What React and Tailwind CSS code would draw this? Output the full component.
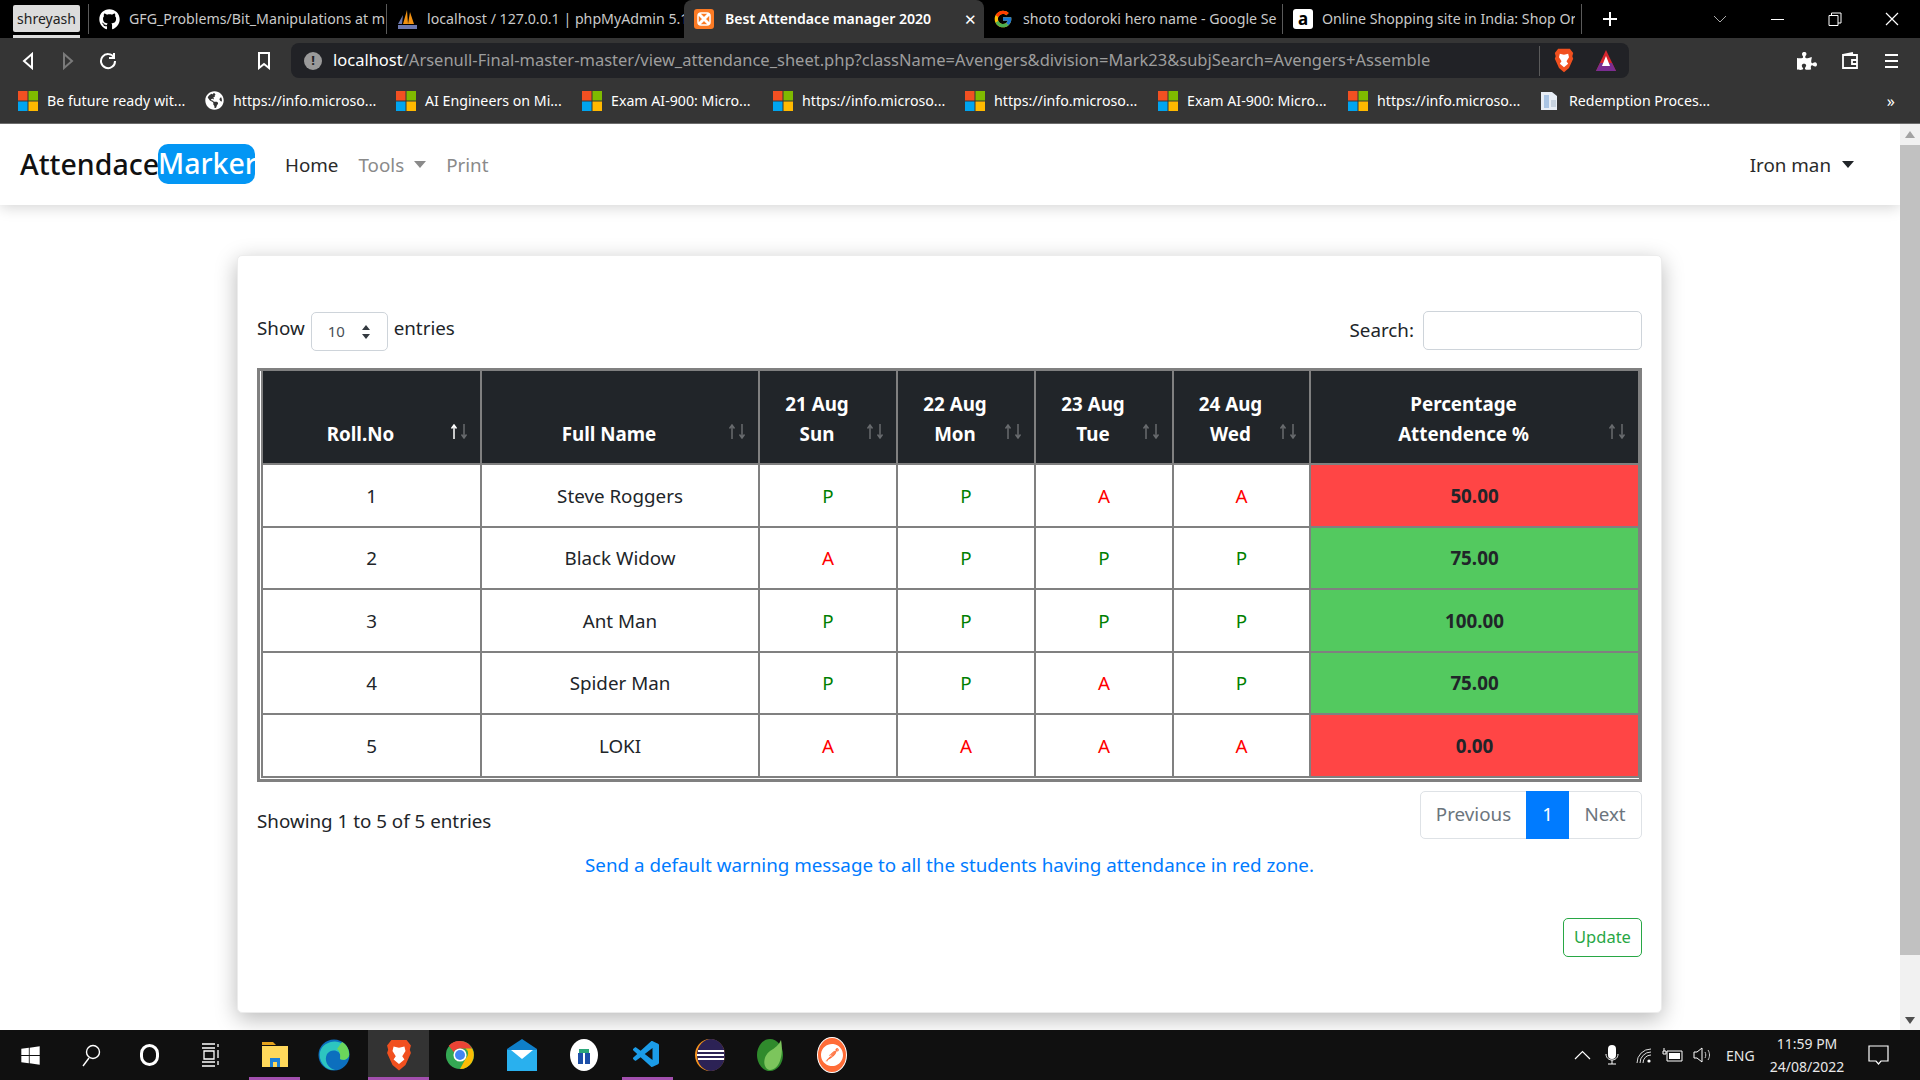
import React from "react";
import { FaGithub, FaWindows, FaPuzzlePiece, FaGlobeAmericas } from "react-icons/fa";
import { FcGoogle } from "react-icons/fc";
import { SiPostman } from "react-icons/si";
import { VscVscode } from "react-icons/vsc";

const Ms = () => (
  <svg width="20" height="20" viewBox="0 0 20 20" className="shrink-0">
    <rect width="9.5" height="9.5" fill="#f25022" />
    <rect x="10.5" width="9.5" height="9.5" fill="#7fba00" />
    <rect y="10.5" width="9.5" height="9.5" fill="#00a4ef" />
    <rect x="10.5" y="10.5" width="9.5" height="9.5" fill="#ffb900" />
  </svg>
);

const Globe = () => <FaGlobeAmericas className="shrink-0 text-white" size={19} />;

const FileIcon = () => (
  <svg width="20" height="20" viewBox="0 0 20 20" className="shrink-0">
    <path d="M1 1h11l5 4v14H1z" fill="#e8eef6" />
    <path d="M4 4h5v13H4z" fill="#a9c4e4" />
    <path d="M11 9h5v7h-5z" fill="#c7d3e0" />
  </svg>
);

const Brave = ({ size = 22 }) => (
  <svg width={size} height={size * 1.25} viewBox="0 0 24 30">
    <path d="M5 1h14l4 5-1 4 1 3-5 11-6 5-6-5-5-11 1-3-1-4z" fill="#f1501f" />
    <path d="M12 8l5-1 1 4-3 5 2 3-5 4-5-4 2-3-3-5 1-4z" fill="#fff" />
  </svg>
);

const tabs = [
  { w: 297, icon: <FaGithub size={21} className="text-white" />, label: "GFG_Problems/Bit_Manipulations at m" },
  {
    w: 298,
    icon: (
      <svg width="21" height="21" viewBox="0 0 21 21">
        <path d="M6 15L10 1l1 14zM11 15l2-12 4 12z" fill="#f29111" />
        <path d="M1 15L6 6l-1 9zM1 16h19v4H1z" fill="#6c78af" />
      </svg>
    ),
    label: "localhost / 127.0.0.1 | phpMyAdmin 5.1",
  },
];

const bookmarks = [
  { w: 187, icon: <Ms />, t: "Be future ready wit..." },
  { w: 191, icon: <Globe />, t: "https://info.microso..." },
  { w: 186, icon: <Ms />, t: "AI Engineers on Mi..." },
  { w: 191, icon: <Ms />, t: "Exam AI-900: Micro..." },
  { w: 192, icon: <Ms />, t: "https://info.microso..." },
  { w: 193, icon: <Ms />, t: "https://info.microso..." },
  { w: 190, icon: <Ms />, t: "Exam AI-900: Micro..." },
  { w: 192, icon: <Ms />, t: "https://info.microso..." },
  { w: 300, icon: <FileIcon />, t: "Redemption Proces..." },
];

const heads = [
  { a: "Roll.No", on: true },
  { a: "Full Name" },
  { a: "21 Aug", b: "Sun" },
  { a: "22 Aug", b: "Mon" },
  { a: "23 Aug", b: "Tue" },
  { a: "24 Aug", b: "Wed" },
  { a: "Percentage", b: "Attendence %" },
];

const rows = [
  [1, "Steve Roggers", "P", "P", "A", "A", "50.00"],
  [2, "Black Widow", "A", "P", "P", "P", "75.00"],
  [3, "Ant Man", "P", "P", "P", "P", "100.00"],
  [4, "Spider Man", "P", "P", "A", "P", "75.00"],
  [5, "LOKI", "A", "A", "A", "A", "0.00"],
];

const Separator = () => <div className="w-px h-[30px] bg-[#5a5a5a] shrink-0" />;

function TabBar() {
  return (
    <div className="h-[38px] bg-black flex items-start shrink-0 text-[#c9c9c9] text-[14.2px]">
      <div className="w-[88px] shrink-0 pl-[13px] pt-[5px]">
        <div className="w-[67px] h-[27px] bg-[#dcdcdc] text-[#222] text-[14px] flex items-center justify-center rounded-[2px]">shreyash</div>
        <div className="w-[67px] h-[3px] bg-[#dcdcdc] mt-[3px]" />
      </div>
      <div className="h-[30px] w-px bg-[#5a5a5a] mt-[4px] shrink-0" />
      {tabs.map((t, i) => (
        <React.Fragment key={i}>
          <div className="flex items-center h-[38px] pl-[10px] gap-[9px] overflow-hidden whitespace-nowrap shrink-0" style={{ width: t.w }}>
            <span className="shrink-0">{t.icon}</span>
            <span className="overflow-hidden">{t.label}</span>
          </div>
          {i === 0 && <div className="h-[30px] w-px bg-[#5a5a5a] mt-[4px] shrink-0" />}
        </React.Fragment>
      ))}
      <div className="w-[300px] h-[38px] bg-[#353535] rounded-t-[8px] -ml-[1px] flex items-center pl-[10px] gap-[11px] text-white font-semibold shrink-0 text-[14.1px]">
        <svg width="20" height="20" viewBox="0 0 20 20" className="shrink-0">
          <rect width="20" height="20" rx="3" fill="#fb7a24" />
          <path d="M5 5l10 10M15 5L5 15" stroke="#fff" strokeWidth="3" />
          <rect x="4" y="4" width="12" height="12" rx="3" fill="none" stroke="#fff" strokeWidth="1.5" />
        </svg>
        <span className="flex-1 whitespace-nowrap">Best Attendace manager 2020</span>
        <span className="text-[15px] pr-[7px] font-normal">✕</span>
      </div>
      <div className="w-[298px] flex items-center h-[38px] pl-[9px] gap-[10px] overflow-hidden whitespace-nowrap shrink-0">
        <FcGoogle size={20} className="shrink-0" />
        <span className="overflow-hidden w-[254px]">shoto todoroki hero name - Google Se</span>
      </div>
      <div className="h-[30px] w-px bg-[#5a5a5a] mt-[4px] shrink-0" />
      <div className="w-[298px] flex items-center h-[38px] pl-[10px] gap-[9px] overflow-hidden whitespace-nowrap shrink-0">
        <span className="w-[20px] h-[20px] rounded-[3px] bg-white text-black font-bold flex items-center justify-center text-[17px] shrink-0">a</span>
        <span className="overflow-hidden w-[253px]">Online Shopping site in India: Shop Or</span>
      </div>
      <div className="h-[30px] w-px bg-[#5a5a5a] mt-[4px] shrink-0" />
      <div className="w-[56px] h-[38px] flex items-center justify-center shrink-0">
        <svg width="16" height="16" viewBox="0 0 16 16"><path d="M8 1v14M1 8h14" stroke="#fff" strokeWidth="2" /></svg>
      </div>
      <div className="flex-1 flex h-[38px] items-center justify-end">
        <svg width="14" height="8" viewBox="0 0 14 8" className="mr-[22px]"><path d="M1 1l6 6 6-6" stroke="#aaa" fill="none" /></svg>
        <div className="w-[57px] flex justify-center"><div className="w-[13px] h-px bg-white" /></div>
        <div className="w-[57px] flex justify-center">
          <svg width="14" height="14" viewBox="0 0 14 14"><path d="M1 3.500h9v10H1zM3.500 3.500V1h9.500v10H10" stroke="#fff" fill="none" /></svg>
        </div>
        <div className="w-[57px] flex justify-center">
          <svg width="14" height="14" viewBox="0 0 14 14"><path d="M1 1l12 12M13 1L1 13" stroke="#fff" strokeWidth="1.2" /></svg>
        </div>
      </div>
    </div>
  );
}

function Toolbar() {
  return (
    <div className="h-[45px] bg-[#353535] flex items-start shrink-0 pt-[5px]">
      <div className="w-[291px] h-[35px] flex items-center shrink-0">
        <svg width="14" height="18" viewBox="0 0 14 18" className="ml-[21px]"><path d="M11 2L3 9l8 7z" fill="none" stroke="#fff" strokeWidth="2" /></svg>
        <svg width="14" height="18" viewBox="0 0 14 18" className="ml-[26px]"><path d="M3 2l8 7-8 7z" fill="none" stroke="#7a7a7a" strokeWidth="2" /></svg>
        <svg width="18" height="18" viewBox="0 0 18 18" className="ml-[24px]"><path d="M15 5.500A7 7 0 1 0 16 9M15 1v5h-5" fill="none" stroke="#fff" strokeWidth="2" /></svg>
        <svg width="14" height="18" viewBox="0 0 14 18" className="ml-[140px]"><path d="M2 1h10v15l-5-4-5 4z" fill="none" stroke="#fff" strokeWidth="2" /></svg>
      </div>
      <div className="w-[1338px] h-[35px] bg-[#212226] rounded-[8px] flex items-center pl-[13px] shrink-0">
        <span className="w-[18px] h-[18px] rounded-full bg-[#9a9a9a] text-[#212226] flex items-center justify-center text-[13px] font-bold shrink-0">!</span>
        <span className="ml-[11px] w-[1206px] text-[16.5px] text-[#9d9d9d] whitespace-nowrap overflow-hidden shrink-0">
          <span className="text-white">localhost</span>/Arsenull-Final-master-master/view_attendance_sheet.php?className=Avengers&amp;division=Mark23&amp;subjSearch=Avengers+Assemble
        </span>
        <Separator />
        <span className="ml-[14px] flex"><Brave size={20} /></span>
        <svg width="24" height="24" viewBox="0 0 24 24" className="ml-[20px]">
          <path d="M12 1l10 21H2z" fill="#d7262e" />
          <path d="M2 22h20l-4-8H6z" fill="#7a2d91" />
          <path d="M12 7l4 10H8z" fill="#fff" />
        </svg>
      </div>
      <div className="flex-1 h-[35px] flex items-center">
        <FaPuzzlePiece size={20} className="text-white ml-[168px]" />
        <svg width="20" height="18" viewBox="0 0 20 18" className="ml-[23px]"><path d="M3 3h14v13H3zM12 8h5v4h-5zM3 3l10-2" fill="none" stroke="#fff" strokeWidth="1.800" /></svg>
        <div className="ml-[25px] flex flex-col gap-[4px]">
          <div className="w-[13px] h-[2px] bg-white" />
          <div className="w-[13px] h-[2px] bg-white" />
          <div className="w-[13px] h-[2px] bg-white" />
        </div>
      </div>
    </div>
  );
}

function BookmarkBar() {
  return (
    <div className="h-[41px] bg-[#353535] border-b border-[#6c6c6c] flex items-center shrink-0 pl-[18px] pb-[4px] text-white text-[14.2px]">
      {bookmarks.map((b, i) => (
        <div key={i} className="flex items-center gap-[9px] whitespace-nowrap shrink-0" style={{ width: b.w }}>
          {b.icon}
          <span>{b.t}</span>
        </div>
      ))}
      <span className="flex-1 text-right pr-[25px] text-[16px]">»</span>
    </div>
  );
}

function Navbar() {
  return (
    <div className="h-[81px] shrink-0 bg-white flex items-center pl-[20px] shadow-[0_2px_14px_rgba(0,0,0,0.18)] relative z-10 text-[18.8px]">
      <div className="text-[28.5px] font-medium text-[#111] flex items-center -mt-[1px] w-[235px]">
        <span className="w-[138px]">Attendace</span>
        <span className="bg-[#0396f4] text-white rounded-[10px] h-[40px] leading-[39px] w-[97px]">Marker</span>
      </div>
      <span className="ml-[30px] pt-[1px] text-[#2a2a2a]">Home</span>
      <span className="ml-[20px] pt-[1px] text-[#8a8a8a]">Tools</span>
      <span className="ml-[10px] w-0 h-0 border-x-[6px] border-x-transparent border-t-[7px] border-t-[#8a8a8a]" />
      <span className="ml-[20px] pt-[1px] text-[#8a8a8a]">Print</span>
      <span className="ml-auto pt-[1px] text-[#2a2a2a]">Iron man</span>
      <span className="ml-[11px] mr-[46px] w-0 h-0 border-x-[6px] border-x-transparent border-t-[7px] border-t-[#212529]" />
    </div>
  );
}

const SortArrows = ({ on }) => (
  <svg width="18" height="15" viewBox="0 0 18 15" className="absolute right-[12px] bottom-[24px]" fill="none" strokeWidth="1.500">
    <path d="M4 15V2M1.500 4.500L4 1l2.500 3.500" stroke={on ? "#ffffff" : "#686b6e"} />
    <path d="M14 0v13M11.500 10.500L14 14l2.500-3.500" stroke="#686b6e" />
  </svg>
);

function DataTable() {
  return (
    <div className="border-[3px] border-[#808080] w-[1385px] px-[1px] pb-[1px]">
      <table className="table-fixed border-collapse w-[1377px] text-[18.8px]">
        <colgroup>
          <col className="w-[219px]" />
          <col className="w-[278px]" />
          <col className="w-[138px]" />
          <col className="w-[138px]" />
          <col className="w-[138px]" />
          <col className="w-[137px]" />
          <col className="w-[329px]" />
        </colgroup>
        <thead>
          <tr className="h-[93px]">
            {heads.map((h, i) => (
              <th key={i} className="relative bg-[#212529] border-2 border-[#808080] border-t-0 text-white font-bold align-bottom text-center leading-[30px] pb-[14px] pr-[22px]">
                {h.a}
                {h.b && <><br />{h.b}</>}
                <SortArrows on={h.on} />
              </th>
            ))}
          </tr>
        </thead>
        <tbody>
          {rows.map((r) => (
            <tr key={r[0]} className="h-[62.500px]">
              {r.map((c, j) => {
                const pct = j === 6;
                const tone = !pct ? "" : parseFloat(c) >= 75 ? "bg-[#53c95f]" : "bg-[#ff4545]";
                const mark = c === "P" ? "text-[#008000]" : c === "A" ? "text-[#ff0000]" : "text-[#212529]";
                return (
                  <td key={j} className={`border-2 border-[#808080] text-center pt-[1px] ${tone} ${mark} ${pct ? "font-bold" : ""}`}>{c}</td>
                );
              })}
            </tr>
          ))}
        </tbody>
      </table>
    </div>
  );
}

function Card() {
  return (
    <div className="w-[1425px] h-[758px] ml-[237px] mt-[50px] bg-white rounded-[5px] border border-[#ececec] shadow-[0_6px_22px_rgba(0,0,0,0.28)] px-[19px] pt-[55px] text-[18.8px] text-[#212529] shrink-0">
      <div className="flex items-start justify-between h-[57px]">
        <div className="flex items-center h-[28px] mt-[3px]">
          <span>Show</span>
          <div className="ml-[6px] mt-[3px] w-[77px] h-[39px] border border-[#ced4da] rounded-[5px] flex items-center pl-[16px] text-[#495057] text-[15px] relative top-[2px]">
            10
            <svg width="10" height="16" viewBox="0 0 10 16" className="ml-[16px]"><path d="M5 1l4 5H1zM5 15l4-5H1z" fill="#343a40" /></svg>
          </div>
          <span className="ml-[6px]">entries</span>
        </div>
        <div className="flex items-center">
          <span className="mr-[9px]">Search:</span>
          <div className="w-[219px] h-[39px] border border-[#ced4da] rounded-[5px]" />
        </div>
      </div>
      <DataTable />
      <div className="flex justify-between items-start mt-[9px] h-[48px]">
        <span className="mt-[16px]">Showing 1 to 5 of 5 entries</span>
        <div className="flex h-[48px] border border-[#dee2e6] rounded-[5px] text-[#6c757d]">
          <span className="w-[105px] flex items-center justify-center">Previous</span>
          <span className="w-[43px] -my-px flex items-center justify-center bg-[#007bff] text-white">1</span>
          <span className="w-[72px] flex items-center justify-center">Next</span>
        </div>
      </div>
      <div className="text-center text-[#007bff] mt-[11px] h-[30px] leading-[30px]">Send a default warning message to all the students having attendance in red zone.</div>
      <div className="flex justify-end mt-[38px]">
        <span className="w-[79px] h-[39px] border border-[#28a745] text-[#28a745] rounded-[5px] flex items-center justify-center text-[16.5px]">Update</span>
      </div>
    </div>
  );
}

function Scrollbar() {
  return (
    <div className="w-[20px] shrink-0 bg-[#f1f1f1] flex flex-col items-center">
      <div className="h-[21px] flex items-center">
        <div className="w-0 h-0 border-x-[5px] border-x-transparent border-b-[7px] border-b-[#a3a3a3]" />
      </div>
      <div className="w-full h-[810px] bg-[#c1c1c1]" />
      <div className="flex-1 flex items-end pb-[6px]">
        <div className="w-0 h-0 border-x-[5px] border-x-transparent border-t-[7px] border-t-[#505050]" />
      </div>
    </div>
  );
}

const Folder = () => (
  <svg width="28" height="28" viewBox="0 0 28 28">
    <path d="M1 1h11l3 3H1z" fill="#e5a21b" />
    <path d="M1 5h26v21H1z" fill="#ffd85b" />
    <path d="M9 26v-9h10v9h-3v-5h-4v5z" fill="#1e80d6" />
  </svg>
);

const Edge = () => (
  <svg width="32" height="34" viewBox="0 0 32 34">
    <circle cx="16" cy="17" r="15.500" fill="#0c6fbe" />
    <path d="M2 14C5 2 26 -2 31 15c1 6-5 8-9 6 3-8-8-12-13-5-3 6 0 14 8 16C8 33 0 24 2 14z" fill="#2dc5c0" />
    <path d="M24 4c6 3 7 9 7 11 1 6-5 8-9 6 1-5-1-9-3-10z" fill="#6bd65b" />
  </svg>
);

const Chrome = () => (
  <svg width="30" height="32" viewBox="0 0 32 32">
    <circle cx="16" cy="16" r="15" fill="#34a853" />
    <path d="M16 1a15 15 0 0 1 13 8H16a7 7 0 0 0-6.500 4L4 6a15 15 0 0 1 12-5z" fill="#ea4335" />
    <path d="M29 9a15 15 0 0 1-13 22l6-11a7 7 0 0 0 0-11z" fill="#fbbc05" />
    <circle cx="16" cy="16" r="7" fill="#fff" />
    <circle cx="16" cy="16" r="5.300" fill="#4285f4" />
  </svg>
);

const Mail = () => (
  <svg width="30" height="32" viewBox="0 0 30 32">
    <path d="M0 10L15 0l15 10v22H0z" fill="#0f7fc9" />
    <path d="M0 11h30v21H0z" fill="#29b0ee" />
    <path d="M4 11h22l-11 9z" fill="#fff" />
  </svg>
);

const Blue = () => (
  <svg width="28" height="32" viewBox="0 0 28 32">
    <ellipse cx="14" cy="16" rx="14" ry="16" fill="#fff" />
    <path d="M9 10h10v4h-10z" fill="#2ca77a" />
    <path d="M8 14h5v11H8zM15 14h5v11h-5z" fill="#1d4fa8" />
  </svg>
);

const Eclipse = () => (
  <svg width="30" height="32" viewBox="0 0 30 32">
    <ellipse cx="15" cy="16" rx="15" ry="16" fill="#f7941e" />
    <ellipse cx="16" cy="16" rx="14" ry="16" fill="#2c2255" />
    <path d="M3 11h26v2H3zM2 15h27v2H2zM3 19h26v2H3z" fill="#fff" />
  </svg>
);

const Spring = () => (
  <svg width="30" height="34" viewBox="0 0 30 34">
    <ellipse cx="15" cy="17" rx="13" ry="16" fill="#2f8a2c" />
    <path d="M26 2c3 16-2 30-11 30C8 31 7 19 15 13c5-3 9-6 11-11z" fill="#7cc55c" />
  </svg>
);

const Postman = () => (
  <span className="w-[30px] h-[36px] rounded-[50%] bg-[#ff6c37] border border-white flex items-center justify-center">
    <SiPostman size={22} className="text-white" />
  </span>
);

const dockApps = [
  { w: 51, el: <Folder />, mark: "w-[51px]" },
  { w: 68, el: <Edge /> },
  { w: 61, el: <Brave size={26} />, mark: "w-[61px]", active: true },
  { w: 61, el: <Chrome /> },
  { w: 63, el: <Mail /> },
  { w: 61, el: <Blue /> },
  { w: 66, el: <VscVscode size={32} className="text-[#1b9ce8]" />, mark: "w-[51px]" },
  { w: 59, el: <Eclipse /> },
  { w: 62, el: <Spring /> },
  { w: 62, el: <Postman /> },
];

function Taskbar() {
  return (
    <div className="h-[50px] shrink-0 bg-[#101010] flex items-center text-white">
      <div className="w-[249px] flex items-center shrink-0">
        <FaWindows size={21} className="ml-[20px]" />
        <svg width="20" height="24" viewBox="0 0 20 24" className="ml-[40px]">
          <circle cx="12" cy="9" r="6.500" fill="none" stroke="#fff" strokeWidth="1.400" />
          <path d="M8 15L2 23" stroke="#fff" strokeWidth="1.400" />
        </svg>
        <div className="ml-[39px] w-[19px] h-[22px] rounded-full border-[3px] border-white" />
        <svg width="20" height="24" viewBox="0 0 20 24" className="ml-[42px]">
          <path d="M1 1h13M1 5h13M3 8h10v8H3zM1 19h13M1 23h13M17 1v3M17 7v8M17 18v4" fill="none" stroke="#fff" strokeWidth="1.300" />
        </svg>
      </div>
      {dockApps.map((a, i) => (
        <div key={i} className={`relative h-[50px] flex items-center justify-center shrink-0 ${a.active ? "bg-[#333333]" : ""}`} style={{ width: a.w }}>
          {a.el}
          {a.mark && <div className={`absolute bottom-0 h-[3px] bg-[#a24fae] ${a.mark}`} />}
        </div>
      ))}
      <div className="flex-1 flex items-center justify-end text-[#e8e8e8]">
        <svg width="17" height="10" viewBox="0 0 17 10"><path d="M1 9l7.500-7.500L16 9" fill="none" stroke="#fff" strokeWidth="1.200" /></svg>
        <svg width="14" height="20" viewBox="0 0 14 20" className="ml-[14px]">
          <rect x="3" y="0" width="8" height="14" rx="4" fill="#fff" />
          <path d="M1 9c0 8 12 8 12 0M7 15v4M3 19h8" fill="none" stroke="#fff" />
        </svg>
        <svg width="16" height="18" viewBox="0 0 16 18" className="ml-[17px]">
          <path d="M1 17a14 14 0 0 1 14-14M4 17a11 11 0 0 1 11-11M7 17a8 8 0 0 1 8-8" fill="none" stroke="#ddd" />
          <circle cx="13" cy="15" r="1.600" fill="#fff" />
        </svg>
        <svg width="21" height="14" viewBox="0 0 21 14" className="ml-[10px]">
          <path d="M5 3h15v10H5z" fill="none" stroke="#fff" />
          <path d="M7 5h11v6H7z" fill="#fff" />
          <path d="M2 0v3M1 3h3v3H1z" stroke="#fff" fill="none" />
        </svg>
        <svg width="20" height="18" viewBox="0 0 20 18" className="ml-[10px]">
          <path d="M1 6h3l5-4v14l-5-4H1z" fill="none" stroke="#fff" />
          <path d="M12 6c1 2 1 4 0 6M15 4c2 3 2 7 0 10" fill="none" stroke="#ccc" />
        </svg>
        <span className="ml-[13px] text-[14px] w-[30px]">ENG</span>
        <div className="ml-[13px] w-[76px] text-[14px] leading-[23px] text-center whitespace-nowrap">
          <div>11:59 PM</div>
          <div>24/08/2022</div>
        </div>
        <svg width="21" height="20" viewBox="0 0 21 20" className="ml-[23px] mr-[31px]">
          <path d="M1 1h19v15h-7l-2.500 3L8 16H1z" fill="none" stroke="#fff" strokeWidth="1.200" />
        </svg>
      </div>
    </div>
  );
}

export default function App() {
  return (
    <div className="w-[1920px] h-[1080px] flex flex-col overflow-hidden bg-white" style={{ fontFamily: '"Noto Sans", "Liberation Sans", sans-serif' }}>
      <TabBar />
      <Toolbar />
      <BookmarkBar />
      <div className="flex flex-1 min-h-0">
        <div className="flex-1 min-w-0 flex flex-col overflow-hidden">
          <Navbar />
          <Card />
        </div>
        <Scrollbar />
      </div>
      <Taskbar />
    </div>
  );
}
